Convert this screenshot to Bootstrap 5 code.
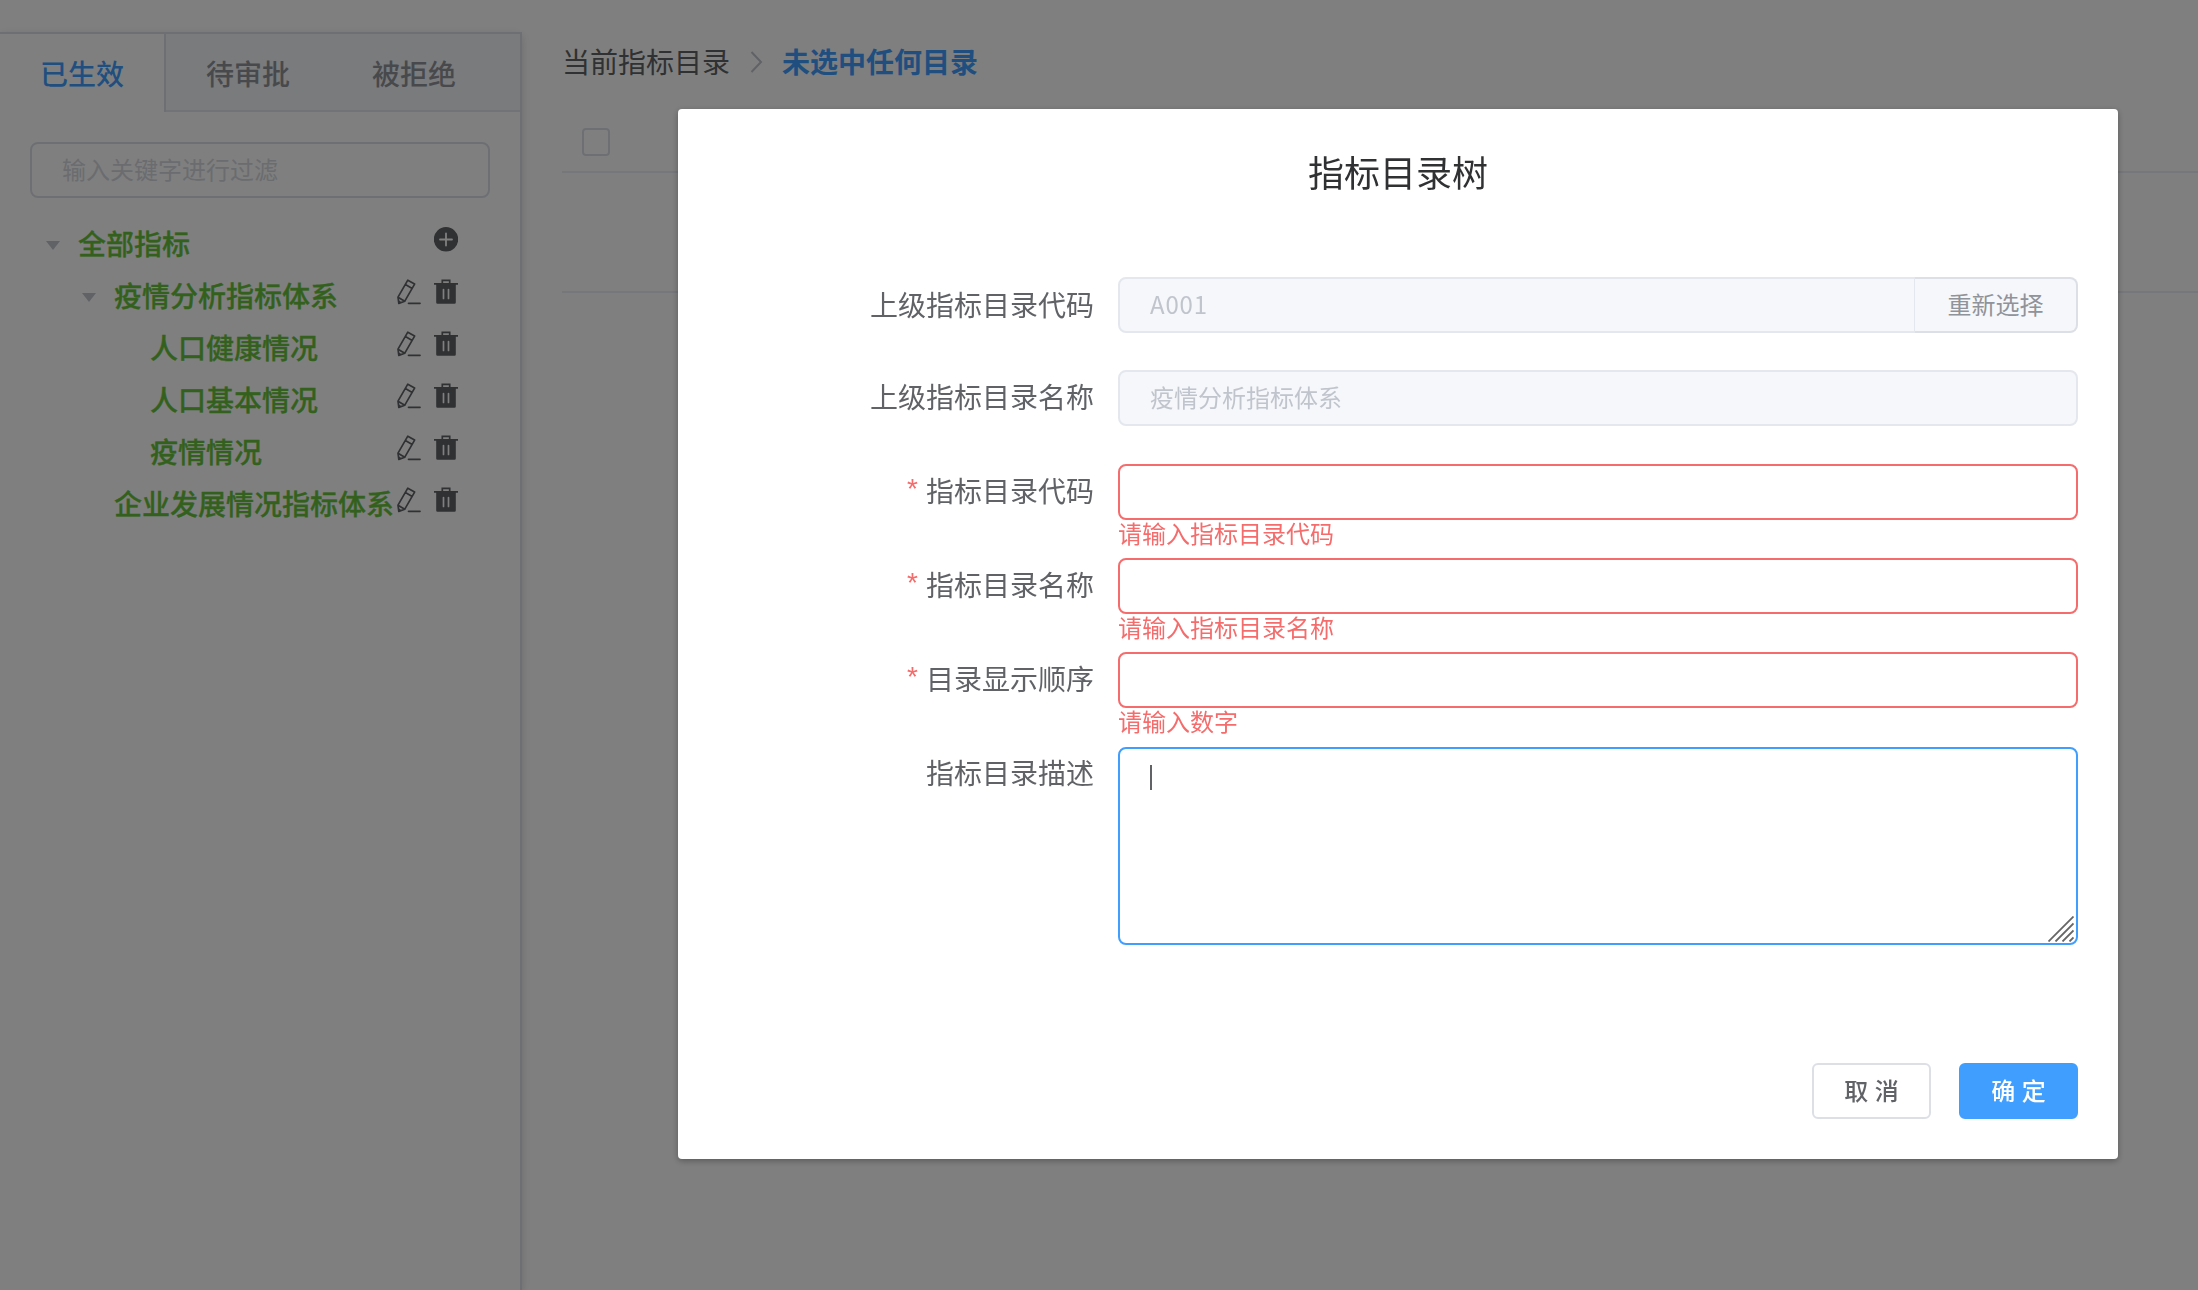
<!DOCTYPE html>
<html lang="zh-CN">
<head>
<meta charset="utf-8">
<meta name="viewport" content="width=device-width, initial-scale=1">
<title>指标目录</title>
<link href="https://cdn.jsdelivr.net/npm/bootstrap@5.3.0/dist/css/bootstrap.min.css" rel="stylesheet">
<style>
  :root { --brand:#409eff; --ok:#67c23a; --err:#f56c6c; --line:#dcdfe6; --soft:#e4e7ed; --ink:#606266; --mute:#909399; --hint:#c0c4cc; --fill:#f5f7fa; }
  html, body { height:100%; }
  body { font-family:"Noto Sans CJK SC", sans-serif; font-size:28px; line-height:1; color:var(--ink); overflow:hidden; background:#fff; }
  .side-panel { width:522px; margin-top:32px; border:2px solid var(--line); border-left:0; border-bottom:0; box-shadow:0 4px 8px rgba(0,0,0,.12), 0 0 12px rgba(0,0,0,.04); }
  .tab-strip { height:78px; background:var(--fill); border-bottom:2px solid var(--soft); }
  .tab-strip .nav-link { height:78px; width:166px; padding:0 0 0 40px; font-size:28px; font-weight:500; line-height:78px; border-radius:0; color:var(--mute); white-space:nowrap; }
  .tab-strip .nav-link.active { color:var(--brand); background:#fff; border-right:2px solid var(--line); }
  .field { height:56px; padding:0 30px 3px; font-size:24px; line-height:49px; border:2px solid var(--line); border-radius:8px; color:var(--ink); background:#fff; }
  .field::placeholder { color:#d6d9de; opacity:1; }
  .field:disabled { background:var(--fill); border-color:var(--soft); color:var(--hint); }
  .field.wrong { border-color:var(--err); }
  .filter-box { padding:30px 30px 0; height:106px; }
  .tree-row { height:52px; color:var(--ok); font-weight:500; padding-right:62px; line-height:50px; white-space:nowrap; -webkit-text-stroke:.3px currentColor; }
  .tree-row span { height:52px; }
  .tree-row svg { flex:none; color:#606266; margin-top:-9px; }
  .tree-row svg + svg { margin-left:13px; }
  .twisty { width:14px; height:9px; flex:none; background:var(--hint); clip-path:polygon(0 0,100% 0,50% 100%); margin:3px 18px 0 0; }
  .lv1 { padding-left:46px; } .lv2 { padding-left:82px; } .lv2.leaf { padding-left:114px; } .lv3 { padding-left:150px; }
  .main-area { padding:48px 0 0 40px; }
  .crumbs { height:28px; line-height:26px; color:var(--ink); }
  .crumbs span { height:28px; }
  .crumbs .now { color:var(--brand); font-weight:700; }
  .grid-head { margin-top:52px; height:45px; padding-left:20px; border-bottom:2px solid #ebeef5; }
  .grid-head .form-check-input { width:28px; height:28px; margin:0; border:2px solid var(--line); border-radius:4px; }
  .grid-empty { height:120px; border-bottom:2px solid #ebeef5; }
  .veil { position:fixed; inset:0; background:rgba(0,0,0,.5); padding:109px 80px 0 678px; }
  .dialog-box { height:1050px; background:#fff; border-radius:4px; box-shadow:0 2px 6px rgba(0,0,0,.3); padding:0 40px; }
  .dialog-box h1 { font-size:36px; font-weight:400; color:#303133; line-height:44px; margin:0; padding-top:40px; height:168px; }
  .item { min-height:56px; margin-bottom:38px; }
  .item.short { margin-bottom:37px; }
  .item .cap { width:376px; margin-right:24px; text-align:right; line-height:52px; height:56px; flex:none; }
  .item.short .cap { line-height:54px; }
  .need::before { content:"*"; color:var(--err); margin-right:8px; font-family:"Liberation Sans", sans-serif; vertical-align:4px; line-height:1; }
  .ctl { width:960px; height:56px; }
  .ctl .msg { color:var(--err); font-size:24px; line-height:24px; padding-top:1px; }
  .append { width:163px; flex:none; border:2px solid var(--line); border-left:0; border-radius:0 8px 8px 0; background:var(--fill); color:var(--mute); font-size:24px; padding:0 0 2px; }
  .code { letter-spacing:.8px; }
  .notes { height:198px; margin-top:1px; border:2px solid var(--brand); border-radius:8px; padding:16px 2px 1px 29px; }
  .caret { width:2px; height:25px; background:var(--ink); margin-left:1px; }
  .actions { padding-top:118px; gap:28px; }
  .act { width:119px; height:56px; border-radius:6px; font-size:24px; font-weight:500; padding:1px 0 0; border:2px solid var(--line); color:var(--ink); font-family:"Liberation Sans","Noto Sans CJK SC",sans-serif; line-height:52px; }
  .act.go { background:var(--brand); border-color:var(--brand); color:#fff; }
</style>
<script src="https://cdn.jsdelivr.net/npm/bootstrap@5.3.0/dist/js/bootstrap.bundle.min.js"></script>
</head>
<body>
<svg class="d-none">
  <symbol id="i-add" viewBox="0 0 24 25"><circle cx="12" cy="12.3" r="12.2" fill="currentColor"/><path d="M12 6.5v12M6 12.5h12" stroke="#fff" stroke-width="1.8" stroke-linecap="round"/></symbol>
  <symbol id="i-edit" viewBox="0 0 24 26"><g fill="none" stroke="currentColor" stroke-width="1.700" stroke-linejoin="round" stroke-linecap="round"><path d="M10.800 1.200l6.800 3.900L7.800 22.200l-6 2.200-.8-6.200zM8.400 5.500l6.800 3.900M1 18.200l6.800 4"/><path d="M11.500 24.300h11.500"/></g><path d="M1.800 24.400l-.4-3.400 3.200 2.200z" fill="currentColor"/></symbol>
  <symbol id="i-del" viewBox="0 0 24 26"><path d="M0 4h24v1.800H0zM2.200 5.500h19.600V23.500a1.300 1.300 0 0 1-1.300 1.300h-17a1.300 1.300 0 0 1-1.300-1.300z" fill="currentColor"/><path d="M8.300 4.500V1.400h7.400v3.100" fill="none" stroke="currentColor" stroke-width="1.700"/><path d="M9.500 10.500v9M14.500 10.500v9" stroke="#fff" stroke-width="1.700" stroke-linecap="round"/></symbol>
</svg>

<div class="d-flex h-100">
  <aside class="side-panel flex-shrink-0">
    <nav class="nav tab-strip flex-nowrap">
      <a class="nav-link active">已生效</a><a class="nav-link">待审批</a><a class="nav-link">被拒绝</a>
    </nav>
    <div class="filter-box"><input class="form-control field" placeholder="输入关键字进行过滤"></div>
    <div>
      <div class="tree-row lv1 d-flex align-items-center"><i class="twisty"></i><span class="flex-grow-1">全部指标</span><svg width="24" height="25"><use href="#i-add"/></svg></div>
      <div class="tree-row lv2 d-flex align-items-center"><i class="twisty"></i><span class="flex-grow-1">疫情分析指标体系</span><svg width="24" height="26"><use href="#i-edit"/></svg><svg width="24" height="26"><use href="#i-del"/></svg></div>
      <div class="tree-row lv3 d-flex align-items-center"><span class="flex-grow-1">人口健康情况</span><svg width="24" height="26"><use href="#i-edit"/></svg><svg width="24" height="26"><use href="#i-del"/></svg></div>
      <div class="tree-row lv3 d-flex align-items-center"><span class="flex-grow-1">人口基本情况</span><svg width="24" height="26"><use href="#i-edit"/></svg><svg width="24" height="26"><use href="#i-del"/></svg></div>
      <div class="tree-row lv3 d-flex align-items-center"><span class="flex-grow-1">疫情情况</span><svg width="24" height="26"><use href="#i-edit"/></svg><svg width="24" height="26"><use href="#i-del"/></svg></div>
      <div class="tree-row lv2 leaf d-flex align-items-center"><span class="flex-grow-1">企业发展情况指标体系</span><svg width="24" height="26"><use href="#i-edit"/></svg><svg width="24" height="26"><use href="#i-del"/></svg></div>
    </div>
  </aside>
  <main class="main-area flex-grow-1">
    <div class="crumbs d-flex align-items-center">
      <span>当前指标目录</span>
      <svg class="mx-3 flex-shrink-0" width="20" height="24" fill="none" stroke="#c0c4cc" stroke-width="2"><path d="M5.500 2l9.500 10-9.500 10"/></svg>
      <span class="now">未选中任何目录</span>
    </div>
    <div class="grid-head"><input class="form-check-input d-block" type="checkbox"></div>
    <div class="grid-empty"></div>
  </main>
</div>

<div class="veil">
  <section class="dialog-box" role="dialog">
    <h1 class="text-center">指标目录树</h1>
    <div class="item short d-flex"><label class="cap">上级指标目录代码</label>
      <div class="ctl input-group flex-nowrap"><input class="form-control field code" value="A001" disabled><button class="btn append">重新选择</button></div></div>
    <div class="item d-flex"><label class="cap">上级指标目录名称</label>
      <div class="ctl"><input class="form-control field" value="疫情分析指标体系" disabled></div></div>
    <div class="item d-flex"><label class="cap need">指标目录代码</label>
      <div class="ctl"><input class="form-control field wrong"><div class="msg">请输入指标目录代码</div></div></div>
    <div class="item d-flex"><label class="cap need">指标目录名称</label>
      <div class="ctl"><input class="form-control field wrong"><div class="msg">请输入指标目录名称</div></div></div>
    <div class="item d-flex"><label class="cap need">目录显示顺序</label>
      <div class="ctl"><input class="form-control field wrong"><div class="msg">请输入数字</div></div></div>
    <div class="item d-flex mb-0"><label class="cap">指标目录描述</label>
      <div class="ctl notes d-flex justify-content-between"><i class="caret"></i>
        <svg class="align-self-end" width="26" height="26" stroke="#666" stroke-width="1.800"><path d="M.5 25.500l25-25M7.500 25.500l18-18M14.500 25.500l11-11M21.500 25.500l4-4"/></svg></div></div>
    <div class="d-flex justify-content-end actions"><button class="btn act">取 消</button><button class="btn act go">确 定</button></div>
  </section>
</div>
</body>
</html>
